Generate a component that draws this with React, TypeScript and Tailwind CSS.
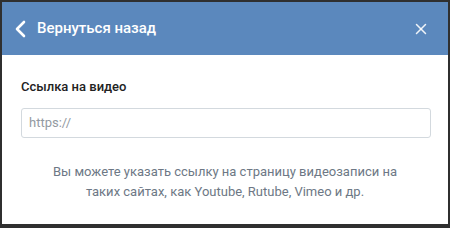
import { X } from 'lucide-react';

export default function App() {
  return (
    <div className="w-[450px] h-[228px] overflow-hidden bg-[#2f2f2f] pt-[2px] pl-[2px] pr-[2px] font-['Roboto',sans-serif]">
      <div className="bg-white h-[222px]">
        {/* Header */}
        <div className="h-[53px] bg-[#5b88bd] flex items-center pl-[12px] pr-[18px]">
          <svg width="14" height="18" viewBox="0 0 14 18" className="shrink-0">
            <polyline points="10,2 3,9 10,16" fill="none" stroke="#fff" strokeWidth="2.6" strokeLinecap="round" strokeLinejoin="round" />
          </svg>
          <span className="ml-[9px] text-[15px] font-medium text-white leading-none">Вернуться назад</span>
          <button className="ml-auto text-white/90 flex items-center">
            <X size={18} strokeWidth={2} />
          </button>
        </div>

        {/* Body */}
        <div className="px-[19px] pt-[23px]">
          <p className="text-[13px] font-medium text-[#222] leading-[18px]">Ссылка на видео</p>
          <div className="mt-[12px] h-[30px] w-[410px] border border-[#d3d9de] rounded-[3px] flex items-center px-[7px]">
            <span className="text-[13px] text-[#939aa2]">https://</span>
          </div>
          <p className="mt-[24px] text-center text-[13px] text-[#6d7885] leading-[20px]">
            Вы можете указать ссылку на страницу видеозаписи на
            <br />
            таких сайтах, как Youtube, Rutube, Vimeo и др.
          </p>
        </div>
      </div>
    </div>
  );
}
